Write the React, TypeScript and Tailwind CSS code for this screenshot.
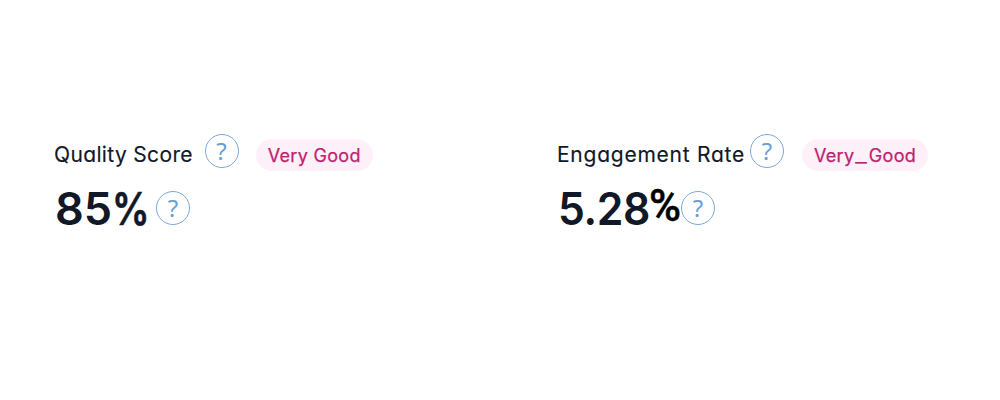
import React from "react";
import type { ReactNode } from "react";

function Help({ className = "" }: { className?: string }) {
  return (
    <span
      className={`flex h-[34px] w-[34px] shrink-0 items-center justify-center rounded-full border-[1.5px] border-[#79a9da] font-['Noto_Sans',sans-serif] text-[24px] leading-none text-[#6a9fd6] ${className}`}
    >
      ?
    </span>
  );
}

function Badge({ children, className = "" }: { children: ReactNode; className?: string }) {
  return (
    <span
      className={`mt-[5px] flex h-8 shrink-0 items-center justify-center rounded-full bg-[#fdf0f9] text-[18px] whitespace-nowrap text-[#bb2470] [-webkit-text-stroke:0.25px_#bb2470] ${className}`}
    >
      {children}
    </span>
  );
}

export default function App() {
  return (
    <main className="flex h-[400px] w-[1000px] bg-white pt-[134px] pl-[54px] font-['Inter',sans-serif] text-[#111827] [font-feature-settings:'cv11']">
      <section className="w-[503px] shrink-0">
        <div className="flex items-start">
          <h2 className="mt-[6px] w-[150.5px] text-[21px] leading-[30px] whitespace-nowrap tracking-[0.35px] [-webkit-text-stroke:0.15px_#111827]">
            Quality Score
          </h2>
          <Help />
          <Badge className="ml-[17px] w-[117.5px] tracking-[0.3px]">Very Good</Badge>
        </div>
        <div className="mt-[17px] flex items-start">
          <p className="mt-[2px] w-[102px] pl-px text-[45px] leading-[37px] font-semibold whitespace-nowrap">
            85
            <span className="inline-block origin-left scale-x-[0.83] [-webkit-text-stroke:0.6px_#111827]">%</span>
          </p>
          <Help className="mt-[3px]" />
        </div>
      </section>
      <section>
        <div className="flex items-start">
          <h2 className="mt-[6px] w-[193px] text-[21px] leading-[30px] whitespace-nowrap tracking-[0.75px] [-webkit-text-stroke:0.15px_#111827]">
            Engagement Rate
          </h2>
          <Help />
          <Badge className="ml-[18px] w-[126px] tracking-[0.3px]">
            Very<span className="mx-[3px] inline-block scale-x-[1.4]">_</span>Good
          </Badge>
        </div>
        <div className="mt-[17px] flex items-start">
          <p className="mt-[2px] flex w-[124px] text-[45px] leading-[37px] font-semibold whitespace-nowrap">
            <span className="w-[92px] origin-left scale-x-[0.95] pl-px tracking-[-0.4px]">5.28</span>
            <span className="-mt-[2px] font-['Roboto',sans-serif] text-[43.5px] font-medium text-black [-webkit-text-stroke:0.5px_#000]">
              %
            </span>
          </p>
          <Help className="mt-[3px]" />
        </div>
      </section>
    </main>
  );
}
